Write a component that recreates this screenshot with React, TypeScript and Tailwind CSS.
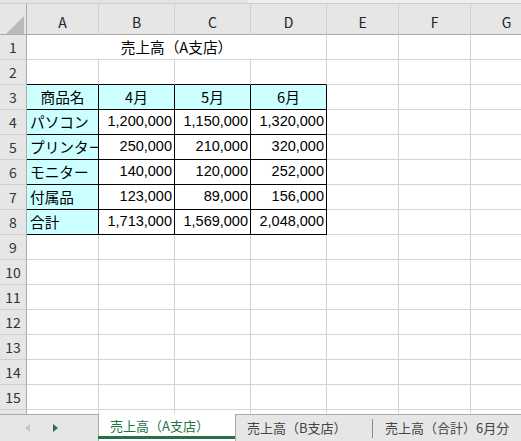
import React from "react";

const COLS = ["A", "B", "C", "D", "E", "F", "G"];

const jp = "font-['Noto_Sans_CJK_JP',sans-serif]";
const num = "font-['Liberation_Sans',sans-serif]";

const data: string[][] = [
  ["商品名", "4月", "5月", "6月"],
  ["パソコン", "1,200,000", "1,150,000", "1,320,000"],
  ["プリンター", "250,000", "210,000", "320,000"],
  ["モニター", "140,000", "120,000", "252,000"],
  ["付属品", "123,000", "89,000", "156,000"],
  ["合計", "1,713,000", "1,569,000", "2,048,000"],
];

const rowGrid = "grid grid-cols-[27px_72px_76px_76px_76px_72px_72px_72px] h-[25px]";

function RowHead({ n }: { n: number }) {
  return (
    <div className={`${jp} flex items-center justify-center bg-[#e6e6e6] border-r border-b border-r-[#ababab] border-b-[#cfcfcf] text-[14px] text-[#333]`}>
      {n}
    </div>
  );
}

function Blank({ cls = "" }: { cls?: string }) {
  return <div className={`border-r border-b border-[#d4d4d4] ${cls}`} />;
}

export default function App() {
  return (
    <div className="w-[521px] h-[441px] overflow-hidden bg-white flex flex-col">
      {/* top strip */}
      <div className="h-[3px] flex">
        <div className="w-[248px] bg-[#e3e3e3]" />
        <div className="flex-1 bg-[#efefef]" />
      </div>

      <div className="h-[411px] overflow-hidden">
        {/* column headers */}
        <div className="grid grid-cols-[27px_72px_76px_76px_76px_72px_72px_72px] h-[32px] border-t border-[#cccccc] bg-[#e6e6e6]">
          <div className="border-r border-b border-r-[#ababab] border-b-[#ababab] relative">
            <svg className="absolute left-[6px] top-[12px]" width="18" height="18" viewBox="0 0 18 18">
              <polygon points="18,0 18,18 0,18" fill="#b9b9b9" />
            </svg>
          </div>
          {COLS.map((c) => (
            <div
              key={c}
              className={`${jp} flex items-center justify-center pt-[7px] border-r border-b border-r-[#cfcfcf] border-b-[#ababab] text-[14px] text-[#222]`}
            >
              {c}
            </div>
          ))}
        </div>

        {/* row 1 - merged title */}
        <div className={rowGrid}>
          <RowHead n={1} />
          <div className={`${jp} col-span-4 flex items-center justify-center border-r border-b border-[#d4d4d4] text-[14.67px] text-black whitespace-nowrap`}>
            売上高（A支店）
          </div>
          <Blank />
          <Blank />
          <Blank />
        </div>

        {/* row 2 */}
        <div className={rowGrid}>
          <RowHead n={2} />
          <div className="border-r border-r-[#d4d4d4] border-b border-b-black" />
          <div className="border-r border-r-[#d4d4d4] border-b border-b-black" />
          <div className="border-r border-r-[#d4d4d4] border-b border-b-black" />
          <div className="border-r border-r-[#d4d4d4] border-b border-b-black" />
          <Blank />
          <Blank />
          <Blank />
        </div>

        {/* table rows 3-8 */}
        {data.map((r, i) => (
          <div key={i} className={rowGrid}>
            <RowHead n={i + 3} />
            {r.map((v, j) => {
              const header = i === 0;
              const fill = header || j === 0;
              const align = header ? "justify-center" : j === 0 ? "justify-start pl-[3px]" : "justify-end pr-[2px]";
              const font = !header && j > 0 ? `${num} text-[14.5px]` : `${jp} text-[14.67px]`;
              return (
                <div
                  key={j}
                  className={`${font} ${align} ${fill ? "bg-[#ccffff]" : "bg-white"} flex items-center overflow-hidden whitespace-nowrap border-r border-b border-black text-black`}
                >
                  {v}
                </div>
              );
            })}
            <Blank />
            <Blank />
            <Blank />
          </div>
        ))}

        {/* empty rows 9-16 */}
        {Array.from({ length: 8 }).map((_, k) => (
          <div key={k} className={rowGrid}>
            <RowHead n={k + 9} />
            {COLS.map((c) => (
              <Blank key={c} />
            ))}
          </div>
        ))}
      </div>

      {/* sheet tabs */}
      <div className={`${jp} flex h-[27px] bg-[#e6e6e6] text-[13px] text-[#444] whitespace-nowrap`}>
        <div className="w-[98px] border-t border-[#ababab] flex items-center">
          <svg className="ml-[25px]" width="5" height="8" viewBox="0 0 5 8">
            <polygon points="5,0 5,8 0,4" fill="#c4c4c4" />
          </svg>
          <svg className="ml-[23px]" width="5" height="8" viewBox="0 0 5 8">
            <polygon points="0,0 0,8 5,4" fill="#217346" />
          </svg>
        </div>
        <div className="w-[137px] bg-white border-l border-[#ababab] flex flex-col">
          <div className="flex-1 flex items-center pl-[11px] pt-[2px] text-[#217346]">売上高（A支店）</div>
          <div className="h-[3px] bg-[#217346] -ml-px" />
          <div className="h-[2px]" />
        </div>
        <div className="w-[137px] border-t border-l border-[#ababab] flex items-center pl-[11px]">
          売上高（B支店）
        </div>
        <div className="flex-1 border-t border-[#ababab] flex items-center">
          <div className="w-px h-[19px] bg-[#8c8c8c]" />
          <span className="ml-[12px]">売上高（合計）6月分</span>
        </div>
      </div>
    </div>
  );
}
